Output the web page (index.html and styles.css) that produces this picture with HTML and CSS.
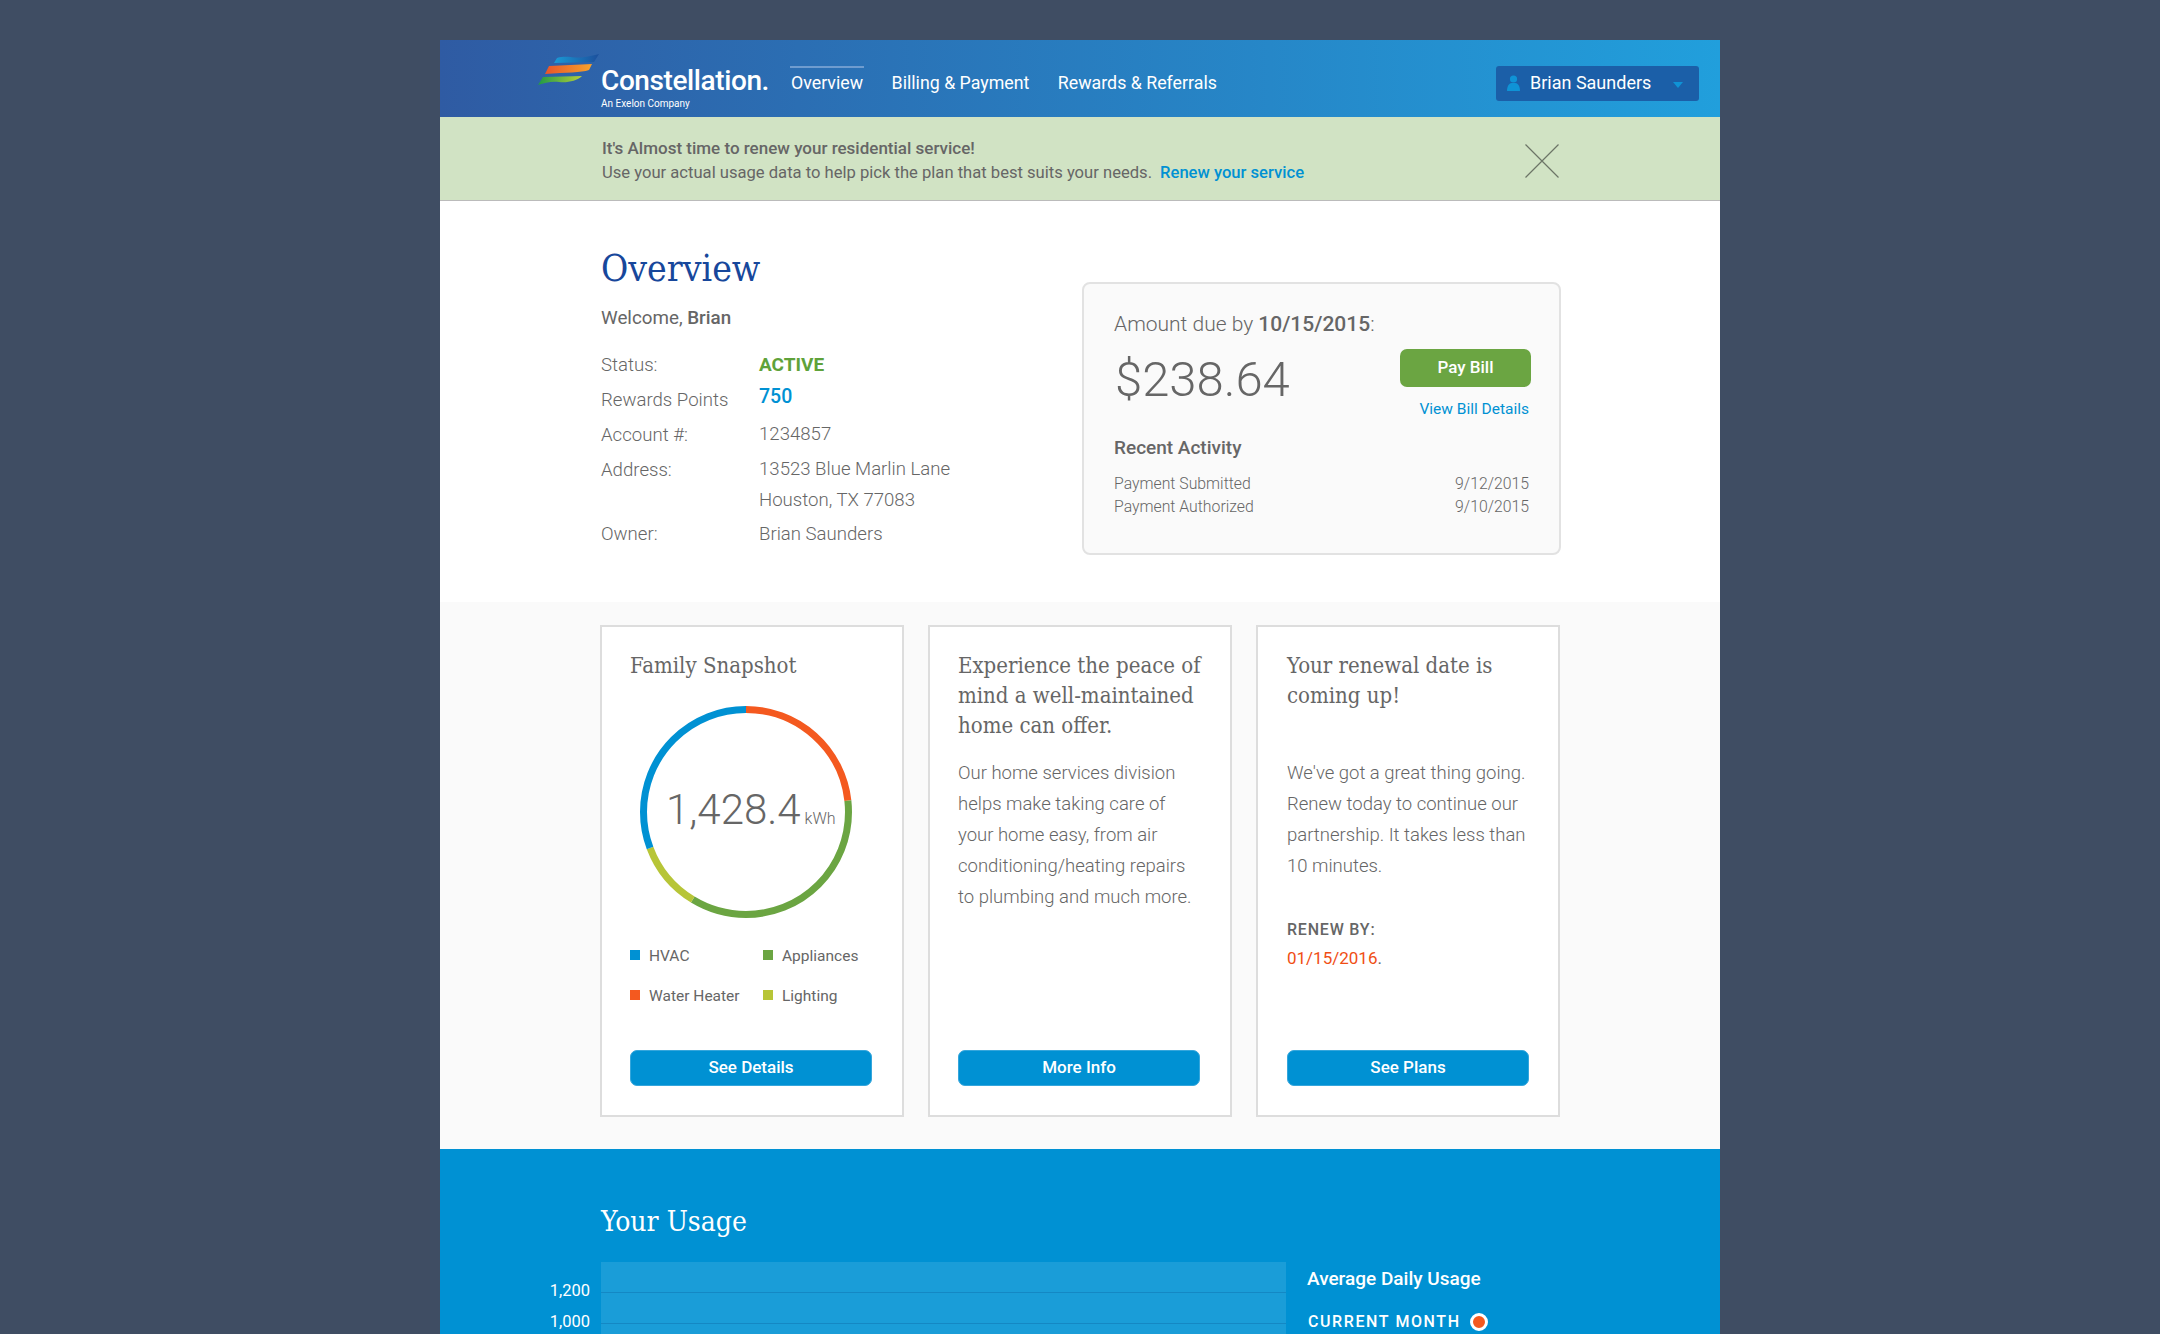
FILE: index.html
```html
<!DOCTYPE html>
<html>
  <head>
    <meta charset="utf-8">
    <meta name="viewport" content="width=device-width, initial-scale=1">
    <title>Constellation - Overview</title>
    <link rel="stylesheet" href="styles.css">
  </head>
  <body>
    <div class="page">
      <header class="topbar">
        <a class="logo">
          <svg class="logo-mark" width="64" height="32" viewBox="0 0 64 32">
            <defs>
              <linearGradient id="swoosh-blue" x1="0" x2="1" y1="0" y2="0">
                <stop offset="0" stop-color="#1a9ad6"/>
                <stop offset="1" stop-color="#1c4f9c"/>
              </linearGradient>
              <linearGradient id="swoosh-orange" x1="0" x2="1" y1="0" y2="0">
                <stop offset="0" stop-color="#e8542a"/>
                <stop offset="1" stop-color="#f7a32b"/>
              </linearGradient>
              <linearGradient id="swoosh-green" x1="0" x2="1" y1="0" y2="0">
                <stop offset="0" stop-color="#1f9a46"/>
                <stop offset="1" stop-color="#b5cf3a"/>
              </linearGradient>
            </defs>
            <path fill="url(#swoosh-blue)" d="M20 5C30 2 38 6 48 4C54 3 58 2 62 1L57 9L17 10Z"/>
            <path fill="url(#swoosh-orange)" d="M12 13L55 11L52 17C44 20 30 19 8 21Z"/>
            <path fill="url(#swoosh-green)" d="M6 24L45 23C40 28 30 30 22 29C14 28 8 30 1 32Z"/>
          </svg>
          <span class="logo-text">
            <span class="logo-name">Constellation.</span>
            <span class="logo-sub">An Exelon Company</span>
          </span>
        </a>
        <nav class="nav">
          <a class="nav-item active">Overview</a>
          <a class="nav-item">Billing &amp; Payment</a>
          <a class="nav-item">Rewards &amp; Referrals</a>
        </nav>
        <div class="user">
          <svg class="user-icon" width="13" height="16" viewBox="0 0 13 16">
            <circle cx="6.5" cy="4" r="3.6"/>
            <path d="M0 16C0 11 2 8.500 4.500 8H8.500C11 8.500 13 11 13 16Z"/>
          </svg>
          <span class="user-name">Brian Saunders</span>
          <span class="user-caret"></span>
        </div>
      </header>

      <div class="notice">
        <div class="notice-text">
          <strong>It's Almost time to renew your residential service!</strong>
          <p>Use your actual usage data to help pick the plan that best suits your needs.<a class="notice-link">Renew your service</a></p>
        </div>
        <svg class="notice-close" width="34" height="34" viewBox="0 0 34 34">
          <path d="M0.500 0.500L33.500 33.500M33.500 0.500L0.500 33.500"/>
        </svg>
      </div>

      <section class="overview">
        <div class="account">
          <h1>Overview</h1>
          <p class="welcome">Welcome, <b>Brian</b></p>
          <dl class="details">
            <dt>Status:</dt>
            <dd class="status">ACTIVE</dd>
            <dt>Rewards Points</dt>
            <dd class="points">750</dd>
            <dt>Account #:</dt>
            <dd>1234857</dd>
            <dt>Address:</dt>
            <dd>13523 Blue Marlin Lane<br>Houston, TX 77083</dd>
            <dt>Owner:</dt>
            <dd>Brian Saunders</dd>
          </dl>
        </div>
        <div class="bill">
          <p class="due">Amount due by <b>10/15/2015</b>:</p>
          <div class="bill-main">
            <span class="amount">$238.64</span>
            <div class="bill-actions">
              <a class="btn-pay">Pay Bill</a>
              <a class="bill-link">View Bill Details</a>
            </div>
          </div>
          <h3>Recent Activity</h3>
          <div class="activity"><span>Payment Submitted</span><span>9/12/2015</span></div>
          <div class="activity"><span>Payment Authorized</span><span>9/10/2015</span></div>
        </div>
      </section>

      <section class="cards">
        <div class="card">
          <h2 class="card-title-short">Family Snapshot</h2>
          <div class="donut">
            <svg width="212" height="212" viewBox="0 0 212 212">
              <g class="donut-ring">
                <circle pathLength="360" stroke="#f4591f" stroke-dasharray="83.500 360" cx="106" cy="106" r="102.500"/>
                <circle pathLength="360" stroke="#6ba542" stroke-dasharray="127.800 360" stroke-dashoffset="-83.500" cx="106" cy="106" r="102.500"/>
                <circle pathLength="360" stroke="#b7c537" stroke-dasharray="38.100 360" stroke-dashoffset="-211.300" cx="106" cy="106" r="102.500"/>
                <circle pathLength="360" stroke="#0091d3" stroke-dasharray="110.600 360" stroke-dashoffset="-249.400" cx="106" cy="106" r="102.500"/>
              </g>
            </svg>
            <div class="donut-value">1,428.4<small>kWh</small></div>
          </div>
          <ul class="legend">
            <li><i class="blue"></i>HVAC</li>
            <li><i class="green"></i>Appliances</li>
            <li><i class="orange"></i>Water Heater</li>
            <li><i class="lime"></i>Lighting</li>
          </ul>
          <a class="btn">See Details</a>
        </div>
        <div class="card">
          <h2>Experience the peace of mind a well-maintained home can offer.</h2>
          <p>Our home services division helps make taking care of your home easy, from air conditioning/heating repairs to plumbing and much more.</p>
          <a class="btn">More Info</a>
        </div>
        <div class="card">
          <h2>Your renewal date is coming up!</h2>
          <p>We've got a great thing going. Renew today to continue our partnership. It takes less than 10 minutes.</p>
          <div class="renew">
            <span class="renew-label">RENEW BY:</span>
            <span class="renew-date">01/15/2016<span class="renew-dot">.</span></span>
          </div>
          <a class="btn">See Plans</a>
        </div>
      </section>

      <section class="usage">
        <h2>Your Usage</h2>
        <div class="usage-body">
          <div class="axis">
            <span>1,200</span>
            <span>1,000</span>
          </div>
          <div class="plot"></div>
          <div class="usage-side">
            <h4>Average Daily Usage</h4>
            <div class="series">CURRENT MONTH<i></i></div>
          </div>
        </div>
      </section>
    </div>
  </body>
</html>
```

FILE: styles.css
```css
* {
  box-sizing: border-box;
}

html,
body {
  height: 1334px;
  overflow: hidden;
}

body {
  margin: 0;
  padding-top: 40px;
  background: #3f4d63;
  color: #666;
  font-family: Roboto, sans-serif;
  font-size: 17px;
  font-weight: 300;
}

h1,
h2,
h3,
h4,
p,
dl,
dd,
ul {
  margin: 0;
  padding: 0;
}

.page {
  width: 1280px;
  margin: 0 auto;
}

/* top bar */
.topbar {
  display: flex;
  height: 77px;
  padding-left: 97px;
  background: linear-gradient(90deg, #2f5ba3, #219fdc);
  color: #fff;
}

.logo {
  display: flex;
}

.logo-mark {
  margin-top: 13px;
}

.logo-text {
  display: flex;
  flex-direction: column;
  padding-top: 25px;
}

.logo-name {
  font-size: 28px;
  font-weight: 500;
  line-height: 32px;
  letter-spacing: -0.4px;
}

.logo-sub {
  font-size: 10px;
  font-weight: 400;
  line-height: 13px;
}

.nav {
  display: flex;
  gap: 26.500px;
  margin-left: 21px;
  padding-top: 26px;
}

.nav-item {
  height: 35px;
  padding: 3px 1px 0;
  font-size: 17.800px;
  font-weight: 400;
  line-height: 24px;
  border-top: 2px solid transparent;
}

.nav-item.active {
  border-top-color: #6f9ccf;
}

.user {
  display: flex;
  align-items: center;
  width: 203px;
  height: 35px;
  margin: 26px 21px 0 auto;
  padding: 0 16px 2px 11px;
  background: #1b5fa8;
  border-radius: 3px;
  font-size: 18px;
  font-weight: 400;
}

.user-icon {
  fill: #0f93d6;
}

.user-name {
  margin-left: 10px;
}

.user-caret {
  width: 0;
  height: 0;
  margin: 4px 0 0 auto;
  border: 5px solid transparent;
  border-top: 6px solid #0f93d6;
  border-bottom: 0;
}

/* renewal notice */
.notice {
  display: flex;
  align-items: center;
  justify-content: space-between;
  height: 84px;
  padding: 4px 161px 0 162px;
  background: #d1e3c4;
  border-bottom: 1px solid #bbb;
  font-size: 16.600px;
  font-weight: 400;
}

.notice-text {
  line-height: 24px;
}

.notice-text strong {
  font-size: 17px;
  font-weight: 500;
}

.notice-link {
  margin-left: 8px;
  color: #0091d3;
  font-weight: 500;
}

.notice-close {
  flex: none;
  margin-top: 1px;
  stroke: #6c7566;
  stroke-width: 1.2;
}

/* account overview */
.overview {
  display: flex;
  justify-content: space-between;
  height: 401px;
  padding: 47px 159px 0 161px;
  background: #fff;
}

h1 {
  color: #17479b;
  font-family: "DejaVu Serif Condensed", "DejaVu Serif", serif;
  font-size: 37px;
  font-weight: 400;
  line-height: 42px;
}

.welcome {
  margin-top: 17px;
  font-size: 18.800px;
  font-weight: 400;
  line-height: 22px;
}

.welcome b {
  font-weight: 500;
}

.details {
  display: grid;
  grid-template-columns: 158px auto;
  grid-auto-rows: minmax(35px, auto);
  margin-top: 20px;
  font-size: 18.600px;
  line-height: 31px;
}

.details dt {
  margin-bottom: 3px;
  padding-top: 1px;
}

.details dt:last-of-type {
  padding-top: 3px;
}

.details dd:last-child {
  padding-top: 3px;
}

.status {
  color: #5fa23a;
  font-size: 19px;
  font-weight: 700;
}

.points {
  color: #0091d3;
  font-size: 19.500px;
  font-weight: 500;
  line-height: 25px;
}

.bill {
  width: 479px;
  height: 273px;
  margin-top: 34px;
  padding: 26px 28px 0 30px;
  background: #fafafa;
  border: 2px solid #e2e2e2;
  border-radius: 8px;
}

.due {
  font-size: 21px;
  line-height: 28px;
}

.due b {
  font-weight: 500;
}

.bill-main {
  display: flex;
  justify-content: space-between;
}

.amount {
  margin-top: 12px;
  margin-left: 1px;
  font-size: 49px;
  line-height: 60px;
}

.bill-actions {
  display: flex;
  flex-direction: column;
  align-items: flex-end;
}

.btn-pay {
  width: 131px;
  height: 38px;
  margin-top: 11px;
  background: #6ba542;
  border-radius: 7px;
  color: #fff;
  font-size: 17px;
  font-weight: 500;
  line-height: 36px;
  text-align: center;
}

.bill-link {
  margin-top: 11px;
  margin-right: 2px;
  color: #0091d3;
  font-size: 15.500px;
  font-weight: 400;
  line-height: 22px;
}

.bill h3 {
  margin-top: 15px;
  font-size: 19px;
  font-weight: 500;
  line-height: 26px;
}

.activity {
  display: flex;
  justify-content: space-between;
  margin-right: 2px;
  font-size: 15.800px;
  line-height: 23px;
}

.bill h3 + .activity {
  margin-top: 11px;
}

/* three cards */
.cards {
  display: flex;
  gap: 24px;
  height: 547px;
  padding: 23px 160px 32px;
  background: #fafafa;
}

.card {
  display: flex;
  flex-direction: column;
  width: 304px;
  padding: 24px 28px 29px 28px;
  background: #fff;
  border: 2px solid #ddd;
}

.card:last-child {
  padding-left: 29px;
  padding-right: 27px;
}

.card h2 {
  min-height: 107px;
  color: #666;
  font-family: "DejaVu Serif Condensed", "DejaVu Serif", serif;
  font-size: 22px;
  font-weight: 400;
  line-height: 30px;
}

.card h2.card-title-short {
  min-height: 0;
}

.card p {
  font-size: 18.500px;
  line-height: 31px;
}

.btn {
  width: 242px;
  height: 36px;
  margin-top: auto;
  background: #0091d3;
  border: 1px solid #35a6dc;
  border-radius: 7px;
  color: #fff;
  font-size: 17px;
  font-weight: 500;
  line-height: 32px;
  text-align: center;
}

.donut {
  position: relative;
  width: 212px;
  height: 212px;
  margin: 25px 0 0 10px;
}

.donut-ring {
  fill: none;
  stroke-width: 7;
  transform: rotate(-90deg);
  transform-origin: 106px 106px;
}

.donut-value {
  position: absolute;
  top: 77px;
  left: 26px;
  font-size: 42px;
  line-height: 54px;
  white-space: nowrap;
}

.donut-value small {
  margin-left: 4px;
  font-size: 16px;
}

.legend {
  display: grid;
  grid-template-columns: 133px auto;
  grid-auto-rows: 40px;
  margin-top: 28px;
  list-style: none;
  font-size: 15.500px;
  font-weight: 400;
  line-height: 20px;
}

.legend li {
  display: flex;
  gap: 9px;
  align-items: flex-start;
}

.legend i {
  width: 10px;
  height: 10px;
  margin-top: 4px;
}

.legend .blue {
  background: #0091d3;
}

.legend .green {
  background: #6ba542;
}

.legend .orange {
  background: #f4591f;
}

.legend .lime {
  background: #b7c537;
}

.renew {
  display: flex;
  flex-direction: column;
  margin-top: 34px;
  line-height: 28px;
}

.renew-label {
  font-size: 16px;
  font-weight: 500;
  letter-spacing: 0.8px;
}

.renew-date {
  color: #f04e14;
  font-size: 17px;
  font-weight: 400;
}

.renew-dot {
  color: #666;
}

/* usage */
.usage {
  height: 185px;
  padding: 55px 0 0 161px;
  background: #0091d3;
  color: #fff;
}

.usage h2 {
  font-family: "DejaVu Serif Condensed", "DejaVu Serif", serif;
  font-size: 28px;
  font-weight: 400;
  line-height: 36px;
}

.usage-body {
  display: flex;
  margin-top: 22px;
}

.axis {
  display: flex;
  flex-direction: column;
  gap: 11px;
  width: 60px;
  margin-left: -71px;
  margin-right: 11px;
  padding-top: 19px;
  font-size: 16.500px;
  font-weight: 400;
  line-height: 20px;
  text-align: right;
}

.plot {
  width: 685px;
  height: 80px;
  background: #1a9dd8 repeating-linear-gradient(180deg, transparent 0 30px, #1488c4 30px 31px);
}

.usage-side {
  margin-left: 21px;
  padding-top: 5px;
}

.usage-side h4 {
  font-size: 19px;
  font-weight: 500;
  line-height: 24px;
}

.series {
  display: flex;
  align-items: center;
  margin-top: 21px;
  margin-left: 1px;
  font-size: 16px;
  font-weight: 500;
  letter-spacing: 1.600px;
  line-height: 20px;
}

.series i {
  width: 18px;
  height: 18px;
  margin-left: 9px;
  background: #f4591f;
  border: 3px solid #fff;
  border-radius: 50%;
}
```
